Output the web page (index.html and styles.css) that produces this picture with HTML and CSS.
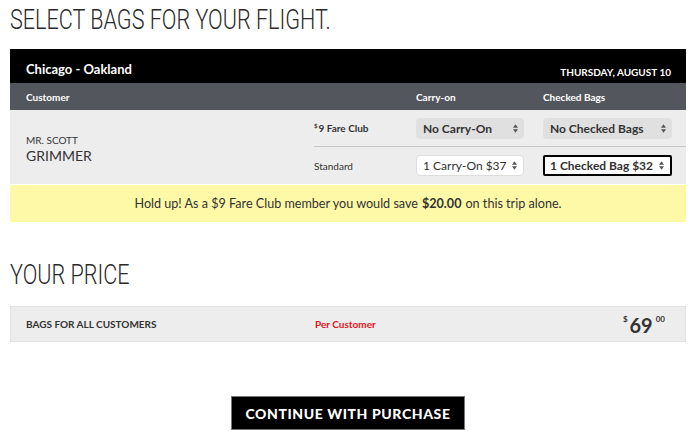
FILE: index.html
```html
<!DOCTYPE html>
<html>
<head>
<meta charset="utf-8">
<link rel="stylesheet" href="styles.css">
</head>
<body>
<h1 class="title">SELECT BAGS FOR YOUR FLIGHT.</h1>
<section class="card">
  <div class="route">
    <span class="route-name">Chicago - Oakland</span>
    <span class="route-date">THURSDAY, AUGUST 10</span>
  </div>
  <div class="grid head">
    <span>Customer</span>
    <span></span>
    <span>Carry-on</span>
    <span>Checked Bags</span>
  </div>
  <div class="grid body">
    <div class="customer">
      <div class="cust-title">MR. SCOTT</div>
      <div class="cust-name">GRIMMER</div>
    </div>
    <div class="cell line fare"><sup>$</sup>9 Fare Club</div>
    <div class="cell line"><div class="sel sel-gray w1">No Carry-On<svg class="arr" viewBox="0 0 6 10"><path d="M0 4 L3 0 L6 4Z M0 6 L3 10 L6 6Z"/></svg></div></div>
    <div class="cell line"><div class="sel sel-gray w2">No Checked Bags<svg class="arr" viewBox="0 0 6 10"><path d="M0 4 L3 0 L6 4Z M0 6 L3 10 L6 6Z"/></svg></div></div>
    <div class="cell std">Standard</div>
    <div class="cell"><div class="sel sel-white w1">1 Carry-On $37<svg class="arr" viewBox="0 0 6 10"><path d="M0 4 L3 0 L6 4Z M0 6 L3 10 L6 6Z"/></svg></div></div>
    <div class="cell"><div class="sel sel-focus w2">1 Checked Bag $32<svg class="arr" viewBox="0 0 6 10"><path d="M0 4 L3 0 L6 4Z M0 6 L3 10 L6 6Z"/></svg></div></div>
  </div>
  <div class="notice">Hold up! As a $9 Fare Club member you would save <b>$20.00</b> on this trip alone.</div>
</section>
<h2 class="title price-title">YOUR PRICE</h2>
<div class="price-row">
  <span class="price-label">BAGS FOR ALL CUSTOMERS</span>
  <span class="per">Per Customer</span>
  <span class="amount"><sup>$</sup><span class="big">69</span><sup>00</sup></span>
</div>
<div class="actions">
  <button class="cta">CONTINUE WITH PURCHASE</button>
</div>
</body>
</html>
```
FILE: styles.css
```css
* { box-sizing: border-box; }
body {
  margin: 0;
  padding: 6px 10px 0 10px;
  font-family: Lato, "Open Sans", sans-serif;
  color: #333;
  background: #fff;
}
.title {
  margin: 0;
  font-family: Roboto, sans-serif;
  font-weight: 300;
  font-size: 27px;
  line-height: 28px;
  letter-spacing: 0;
  color: #2a2a2a;
  transform: scaleX(0.8);
  transform-origin: left;
}
.card { margin-top: 15px; width: 676px; }
.route {
  background: #000;
  color: #fff;
  height: 34px;
  display: flex;
  justify-content: space-between;
  align-items: flex-end;
  padding: 0 15px 5px 16px;
}
.route-name { font-size: 13px; font-weight: 700; line-height: 16px; padding-bottom: 1px; }
.route-date { font-size: 10px; font-weight: 700; line-height: 12px; }
.grid {
  display: grid;
  grid-template-columns: 288px 102px 127px 1fr;
  padding-left: 16px;
}
.head {
  background: #53575d;
  color: #fff;
  height: 27px;
  align-items: center;
  font-size: 10px;
  font-weight: 700;
}
.body {
  background: #ededed;
  grid-template-rows: 37px 37px;
}
.customer {
  grid-row: 1 / 3;
  grid-column: 1;
  display: flex;
  flex-direction: column;
  justify-content: center;
  padding-top: 4px;
}
.cust-title { font-size: 10px; line-height: 13px; color: #333; }
.cust-name { font-size: 14px; line-height: 17px; color: #333; }
.cell {
  display: flex;
  align-items: center;
  font-size: 10px;
}
.line { border-bottom: 1px solid #c8c8c8; }
.fare { font-weight: 700; }
.fare sup { font-size: 6px; align-self: flex-start; margin-top: 12px; margin-right: 1px; }
.sel {
  position: relative;
  height: 21px;
  border-radius: 4px;
  display: flex;
  align-items: center;
  padding-left: 7px;
  font-size: 12px;
  color: #333;
}
.w1 { width: 108px; }
.w2 { width: 129px; }
.sel-gray { background: #e0e0e0; font-weight: 700; }
.sel-white { background: #fff; border: 1px solid #ddd; padding-left: 6px; }
.sel-focus { background: #fff; border: 2px solid #000; border-radius: 2px; font-weight: 700; padding-left: 5px; }
.arr {
  position: absolute;
  right: 6px;
  top: 50%;
  width: 5px;
  height: 9px;
  margin-top: -4.5px;
  fill: #555;
}
.notice {
  margin-top: 1px;
  background: #fef9a7;
  height: 37px;
  display: flex;
  align-items: center;
  justify-content: center;
  font-size: 12.6px;
  color: #333;
}
.notice b { margin: 0 4px; }
.price-title { margin-top: 39px; }
.price-row {
  margin-top: 17px;
  width: 676px;
  height: 36px;
  background: #ededed;
  border: 1px solid #e2e2e2;
  display: grid;
  grid-template-columns: 289px 1fr auto;
  align-items: center;
  padding: 0 20px 0 15px;
}
.price-label { font-size: 10px; font-weight: 700; color: #333; }
.per { font-size: 10px; font-weight: 700; color: #e8141b; }
.amount { font-weight: 700; color: #333; display: flex; align-items: flex-start; }
.amount sup { font-size: 8px; line-height: 10px; }
.amount sup:first-child { margin-right: 2px; }
.amount sup:last-child { margin-left: 3px; }
.big { font-size: 20px; line-height: 20px; margin-top: 1px; }
.actions {
  display: flex;
  justify-content: center;
  margin-top: 54px;
}
.cta {
  background: #000;
  color: #fff;
  border: 1px solid #777;
  width: 234px;
  height: 34px;
  font-family: Lato, sans-serif;
  font-weight: 900;
  font-size: 14px;
  letter-spacing: 0.6px;
  padding: 0;
}
```
